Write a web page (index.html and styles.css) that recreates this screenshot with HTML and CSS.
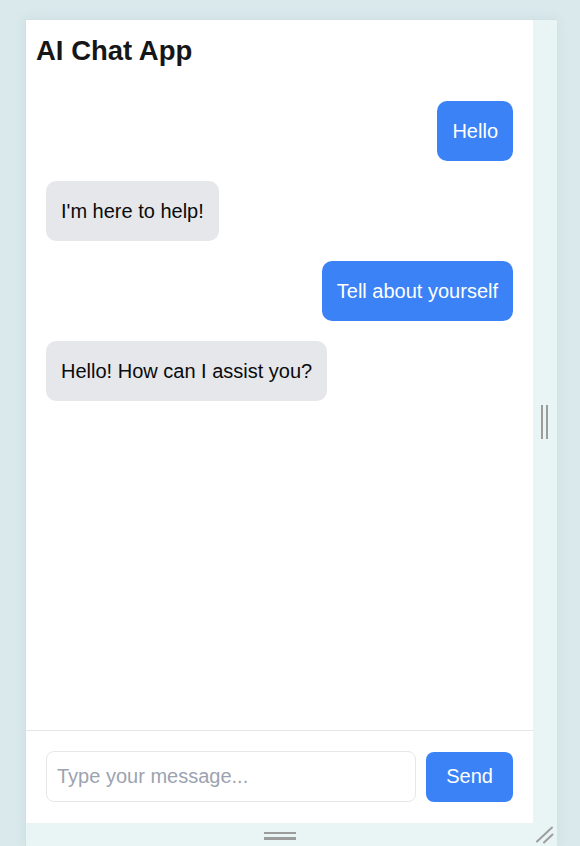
FILE: index.html
```html
<!DOCTYPE html>
<html lang="en">
<head>
<meta charset="utf-8">
<title>AI Chat App</title>
<link rel="stylesheet" href="styles.css">
</head>
<body>
<div class="frame">
  <div class="app">
    <header class="header"><h1 class="title">AI Chat App</h1></header>
    <main class="messages">
      <div class="msg user">Hello</div>
      <div class="msg bot">I'm here to help!</div>
      <div class="msg user">Tell about yourself</div>
      <div class="msg bot">Hello! How can I assist you?</div>
    </main>
    <form class="composer">
      <input class="input" type="text" placeholder="Type your message...">
      <button class="send" type="button">Send</button>
    </form>
  </div>
  <div class="handle-v"><span class="bar-v"></span><span class="bar-v"></span></div>
  <div class="handle-h"><span class="bar-h"></span><span class="bar-h"></span></div>
  <div class="corner">
    <svg width="24" height="24" viewBox="0 0 24 24"><path d="M4 18.5 L19 4.5 M11 19.5 L19.5 11.5" stroke="#9e9e9e" stroke-width="2" stroke-linecap="round" fill="none"/></svg>
  </div>
</div>
</body>
</html>
```
FILE: styles.css
```css
html, body {
  margin: 0;
  padding: 0;
}
body {
  background: #d9e9ec;
  font-family: "Liberation Sans", Arial, sans-serif;
  height: 846px;
  overflow: hidden;
}
.frame {
  margin: 19px 0 0 25px;
  display: grid;
  grid-template-columns: 507px 24px;
  grid-template-rows: 803px 24px;
  width: 531px;
  border-top: 1px solid #d3dfe1;
  border-left: 1px solid #d3dfe1;
  box-shadow: 0 0 10px rgba(120, 150, 155, 0.12);
}
.app {
  background: #ffffff;
  display: flex;
  flex-direction: column;
  min-height: 0;
}
.header {
  padding: 17px 10px 16px;
}
.title {
  margin: 0;
  font-size: 27.5px;
  line-height: 28px;
  font-weight: 700;
  color: #161616;
}
.messages {
  flex: 1;
  padding: 20px;
  display: flex;
  flex-direction: column;
  gap: 20px;
  align-items: flex-start;
}
.msg {
  font-size: 20px;
  line-height: 30px;
  padding: 15px 15px;
  border-radius: 10px;
  max-width: 75%;
}
.user {
  align-self: flex-end;
  background: #3b82f6;
  color: #ffffff;
}
.bot {
  background: #e5e7eb;
  color: #0a0a0a;
}
.composer {
  margin: 0;
  border-top: 1px solid #e5e7eb;
  padding: 20px 20px 21px;
  display: flex;
  align-items: center;
  gap: 10px;
}
.input {
  flex: 1;
  box-sizing: border-box;
  height: 51px;
  border: 1px solid #e5e7eb;
  border-radius: 8px;
  padding: 0 10px;
  font-family: "Liberation Sans", Arial, sans-serif;
  font-size: 20px;
  color: #111;
  outline: none;
}
.input::placeholder {
  color: #9ca3af;
}
.send {
  height: 50px;
  padding: 0 20px;
  border: none;
  border-radius: 8px;
  background: #3b82f6;
  color: #ffffff;
  font-family: "Liberation Sans", Arial, sans-serif;
  font-size: 20px;
}
.handle-v {
  background: #e9f4f5;
  display: flex;
  justify-content: center;
  align-items: center;
  gap: 2.5px;
  padding-right: 1px;
}
.bar-v {
  width: 2.5px;
  height: 34px;
  background: #9c9c9c;
}
.handle-h {
  background: #e9f4f5;
  display: flex;
  flex-direction: column;
  justify-content: center;
  align-items: center;
  gap: 3px;
  padding-top: 1px;
  box-sizing: border-box;
}
.bar-h {
  width: 32px;
  height: 2.5px;
  background: #9c9c9c;
}
.corner {
  background: #e9f4f5;
  display: flex;
}
```
